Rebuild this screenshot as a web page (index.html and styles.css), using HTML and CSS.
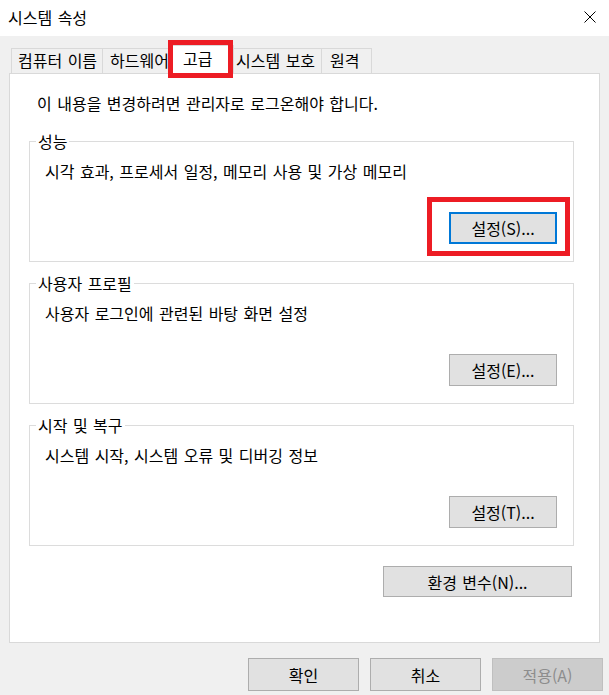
FILE: index.html
```html
<!DOCTYPE html>
<html lang="ko">
<head>
<meta charset="utf-8">
<title>시스템 속성</title>
<link rel="stylesheet" href="styles.css">
</head>
<body>
<div class="window">
  <div class="titlebar">
    <span class="title">시스템 속성</span>
    <svg class="close" width="12" height="12" viewBox="0 0 12 12"><path d="M0.5 0.5 L11.5 11.5 M11.5 0.5 L0.5 11.5" stroke="#000" stroke-width="1" fill="none"/></svg>
  </div>
  <div class="tabs">
    <div class="tab t1">컴퓨터 이름</div>
    <div class="tab t2">하드웨어</div>
    <div class="tab t3 sel">고급<span class="mark mark-tab"></span></div>
    <div class="tab t4">시스템 보호</div>
    <div class="tab t5">원격</div>
  </div>
  <div class="panel">
    <p class="notice">이 내용을 변경하려면 관리자로 로그온해야 합니다.</p>
    <fieldset class="group first">
      <legend>성능</legend>
      <div class="gb">
        <p class="desc">시각 효과, 프로세서 일정, 메모리 사용 및 가상 메모리</p>
        <div class="row"><button class="btn focus">설정(S)...<span class="mark mark-btn"></span></button></div>
      </div>
    </fieldset>
    <fieldset class="group">
      <legend>사용자 프로필</legend>
      <div class="gb">
        <p class="desc">사용자 로그인에 관련된 바탕 화면 설정</p>
        <div class="row"><button class="btn">설정(E)...</button></div>
      </div>
    </fieldset>
    <fieldset class="group">
      <legend>시작 및 복구</legend>
      <div class="gb">
        <p class="desc">시스템 시작, 시스템 오류 및 디버깅 정보</p>
        <div class="row"><button class="btn">설정(T)...</button></div>
      </div>
    </fieldset>
    <div class="envrow"><button class="btn env">환경 변수(N)...</button></div>
  </div>
  <div class="footer">
    <button class="btn big">확인</button>
    <button class="btn big">취소</button>
    <button class="btn big disabled">적용(A)</button>
  </div>
</div>
</body>
</html>
```
FILE: styles.css
```css
* { box-sizing: border-box; }
html, body { margin: 0; padding: 0; }
body {
  width: 609px;
  height: 695px;
  overflow: hidden;
  background: #f0f0f0;
  font-family: "Noto Sans CJK KR", "Noto Sans", sans-serif;
  font-size: 16px;
  color: #000;
  word-spacing: 1px;
}
.window { width: 609px; height: 695px; }
.titlebar {
  height: 36px;
  background: #fff;
  display: flex;
  align-items: center;
  justify-content: space-between;
  padding: 0 13px 2px 8px;
  line-height: 20px;
}
.close { display: block; }

.tabs {
  display: flex;
  height: 25px;
  margin: 12px 0 0 11px;
  position: relative;
  z-index: 1;
}
.tab {
  height: 25px;
  border-top: 1px solid #d9d9d9;
  border-left: 1px solid #d9d9d9;
  line-height: 23px;
  white-space: nowrap;
  overflow: hidden;
  background: #f0f0f0;
}
.t1 { width: 91px; padding-left: 6px; }
.t2 { width: 68px; padding-left: 7px; }
.t3 { width: 64px; padding-left: 12px; }
.t4 { width: 87px; padding-left: 2px; border-left: none; }
.t5 { width: 51px; padding-left: 8px; border-right: 1px solid #d9d9d9; }
.tab.sel {
  height: 29px;
  margin-top: -3px;
  background: #fff;
  position: relative;
  overflow: visible;
  border-right: 1px solid #d9d9d9;
  line-height: 24px;
}

.mark {
  position: absolute;
  border: 5px solid #ed1c24;
  pointer-events: none;
}
.mark-tab { left: -3px; right: 0; top: -6px; bottom: -4px; }
.mark-btn { left: -24px; right: -15px; top: -17px; bottom: -14px; }

.panel {
  margin-left: 9px;
  width: 591px;
  height: 570px;
  border: 1px solid #d9d9d9;
  background: #fff;
  padding: 19px 0 0 19px;
}
p { margin: 0; line-height: 20px; }
.notice { margin-left: 8px; }

.group {
  margin: 11px 0 0;
  padding: 0;
  width: 545px;
  min-width: 0;
  border: 1px solid #dcdcdc;
}
.group.first { margin-top: 18px; }
.group legend {
  padding: 0 2px;
  margin-left: 6px;
  line-height: 20px;
}
.gb { padding: 10px 16px 17px 15px; }
.row {
  display: flex;
  justify-content: flex-end;
  margin-top: 31px;
}

.btn {
  font-family: inherit;
  font-size: 16px;
  color: #000;
  background: #e1e1e1;
  border: 1px solid #adadad;
  width: 108px;
  height: 32px;
  padding: 0;
  line-height: 20px;
  position: relative;
  word-spacing: 1px;
}
.btn.focus { border: 2px solid #0078d7; }

.envrow {
  display: flex;
  justify-content: flex-end;
  margin: 20px 27px 0 0;
}
.btn.env { width: 189px; height: 31px; }

.footer {
  display: flex;
  justify-content: flex-end;
  gap: 11px;
  margin: 15px 6px 0 0;
}
.btn.big { width: 111px; height: 33px; }
.btn.disabled { background: #cccccc; border-color: #bfbfbf; color: #8d8d8d; }
```
